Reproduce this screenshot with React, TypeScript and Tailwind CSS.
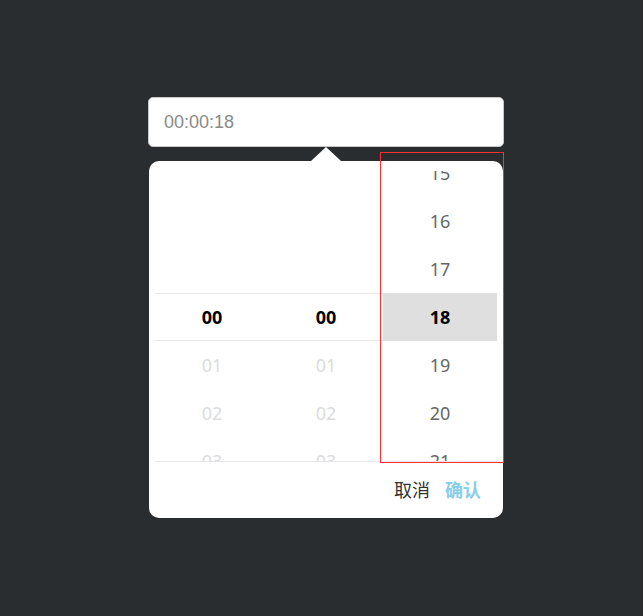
const hours = ["00", "01", "02", "03"]
const minutes = ["00", "01", "02", "03"]
const seconds = ["15", "16", "17", "18", "19", "20", "21"]

function PlainColumn({ items }: { items: string[] }) {
  return (
    <div className="flex flex-col pt-[122px]">
      {items.map((v, i) => (
        <div
          key={v}
          className={
            i === 0
              ? "h-[48px] flex items-center justify-center border-y border-[#e6e6ec] font-bold text-black"
              : "h-[48px] flex items-center justify-center text-[#dcdcdc]"
          }
        >
          {v}
        </div>
      ))}
    </div>
  )
}

export default function App() {
  return (
    <div className="min-h-screen w-full bg-[#2a2d30] flex pl-[148px] pt-[97px]">
      <div className="relative w-[356px]" style={{ fontFamily: '"Noto Sans", "Noto Sans CJK SC", sans-serif' }}>
        <div className="h-[50px] bg-white border border-[#c8c8c8] rounded-[5px] flex items-center px-[15px]">
          <span className="text-[18px] text-[#8a8a8a]" style={{ fontFamily: '"Liberation Sans", Arial, sans-serif' }}>
            00:00:18
          </span>
        </div>

        <div className="flex flex-col items-center">
          <div className="w-0 h-0 border-x-[15px] border-x-transparent border-b-[14px] border-b-white" />
          <div className="w-[354px] bg-white rounded-[10px] px-[6px] pt-[10px]">
            <div className="grid grid-cols-3 h-[291px] overflow-hidden border-b border-[#e6e6ec] text-[18px]">
              <PlainColumn items={hours} />
              <PlainColumn items={minutes} />
              <div className="flex flex-col -mt-[22px]">
                {seconds.map((v) => (
                  <div
                    key={v}
                    className={
                      v === "18"
                        ? "h-[48px] shrink-0 flex items-center justify-center bg-[#dfdfdf] font-bold text-black"
                        : "h-[48px] shrink-0 flex items-center justify-center text-[#666]"
                    }
                  >
                    {v}
                  </div>
                ))}
              </div>
            </div>
            <div className="h-[56px] flex items-center justify-end gap-[15px] pr-[16px] text-[18px]">
              <span className="text-[#333]">取消</span>
              <span className="text-[#87ceeb] font-bold">确认</span>
            </div>
          </div>
        </div>

        <div className="absolute left-[232px] top-[55px] w-[124px] h-[311px] border border-[#ff3030] pointer-events-none" />
      </div>
    </div>
  )
}
